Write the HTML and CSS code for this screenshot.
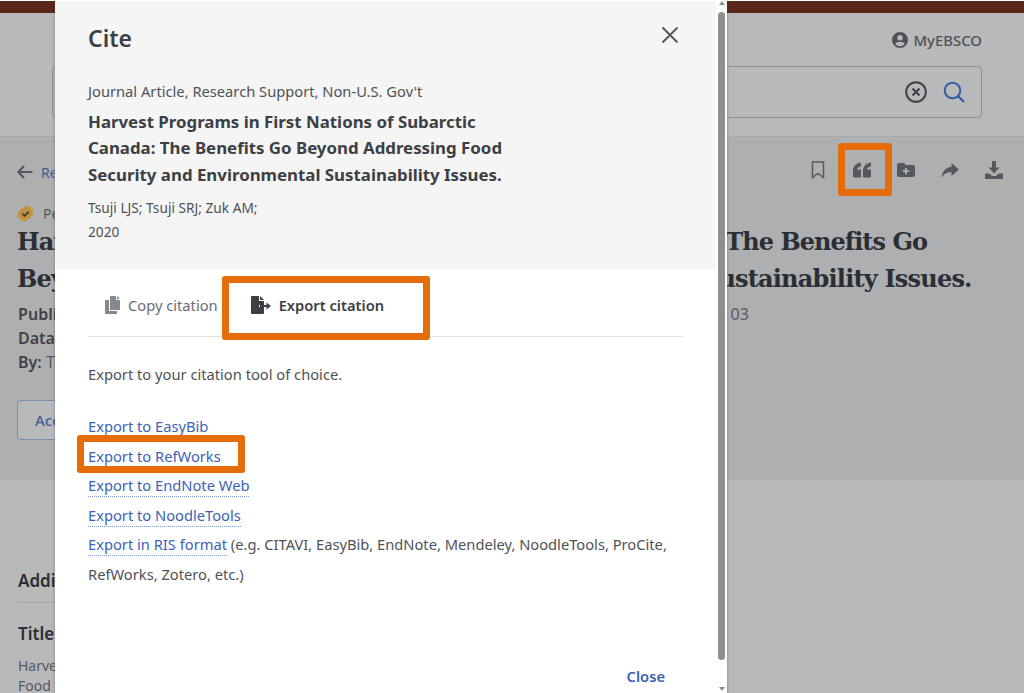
FILE: index.html
```html
<!DOCTYPE html>
<html lang="en">
<head>
<meta charset="utf-8">
<title>Cite</title>
<link rel="stylesheet" href="styles.css">
</head>
<body>
<div class="page">
  <div class="topbar"></div>
  <header class="header">
    <div class="account">
      <svg class="account-icon" viewBox="0 0 16 16"><path fill-rule="evenodd" d="M8 0a8 8 0 1 0 0 16A8 8 0 0 0 8 0zm0 3a2.7 2.7 0 1 1 0 5.400A2.700 2.700 0 0 1 8 3zm0 11.200c-1.900 0-3.600-.9-4.700-2.200.5-1.300 1.800-2.100 3.200-2.100h3c1.400 0 2.700.8 3.200 2.100A6.200 6.200 0 0 1 8 14.200z"/></svg>
      <span>MyEBSCO</span>
    </div>
    <div class="search">
      <svg class="clear-icon" viewBox="0 0 22 22"><circle cx="11" cy="11" r="9.800" fill="none" stroke="#3f4348" stroke-width="2"/><path d="M7.500 7.500l7 7M14.500 7.500l-7 7" stroke="#3f4348" stroke-width="2.200"/></svg>
      <svg class="search-icon" viewBox="0 0 22 22"><circle cx="9.500" cy="9.500" r="7.800" fill="none" stroke="#2f5ea6" stroke-width="2"/><path d="M15 15l6 6" stroke="#2f5ea6" stroke-width="2.200"/></svg>
    </div>
  </header>
  <main class="article">
    <div class="article-top">
      <div class="back">
        <svg class="back-icon" viewBox="0 0 16 14"><path d="M7 1L1.500 7 7 13M2 7h13.500" fill="none" stroke="#55595e" stroke-width="2.200"/></svg>
        <span class="back-link">Results</span>
      </div>
      <div class="actions">
        <svg class="act bookmark" viewBox="0 0 14 18"><path d="M1.500 1h11v15.500L7 12.500l-5.500 4z" fill="none" stroke="#55595e" stroke-width="1.500"/></svg>
        <svg class="act quote" viewBox="0 0 18 16"><path d="M8 .5C3.500 1 .5 3.500 0 8v6.500a1 1 0 0 0 1 1h6a1 1 0 0 0 1-1V8.500a1 1 0 0 0-1-1H4c.3-1.700 1.900-2.800 4-3zM18 .5c-4.500.5-7.500 3-8 7.500v6.500a1 1 0 0 0 1 1h6a1 1 0 0 0 1-1V8.500a1 1 0 0 0-1-1h-3c.3-1.700 1.900-2.800 4-3z" fill="#55595e"/></svg>
        <svg class="act folder" viewBox="0 0 18 14"><path fill-rule="evenodd" d="M2 0h5l2 2h7a2 2 0 0 1 2 2v8a2 2 0 0 1-2 2H2a2 2 0 0 1-2-2V2a2 2 0 0 1 2-2zm6 5v2.300H5.700v1.700H8v2.300h1.800V9h2.400V7.300H9.800V5z" fill="#55595e"/></svg>
        <svg class="act share" viewBox="0 0 18 15"><path d="M10.500 0L18 6.500 10.500 13V9.200C6 9.200 3 10.500 1 14.500 1 9 4 4.500 10.500 3.800z" fill="#55595e"/></svg>
        <svg class="act download" viewBox="0 0 18 18"><path d="M7 0h4v6.500h3.500L9 12.500 3.500 6.500H7zM0 12.500h4.500L7 15h4l2.500-2.500H18V18H0z" fill="#55595e"/></svg>
      </div>
    </div>
    <div class="peer">
      <svg class="peer-icon" viewBox="0 0 16 16"><path d="M8 0l2 1.400 2.400-.2.900 2.300 2.100 1.200-.6 2.300.6 2.300-2.100 1.200-.9 2.300-2.400-.2L8 16l-2-1.400-2.400.2-.9-2.300L.6 11.300 1.200 9 .6 6.700l2.100-1.200.9-2.300 2.400.2z" fill="#c2923c"/><path d="M5 8l2.200 2.200L11 6.300" fill="none" stroke="#33373b" stroke-width="1.600"/></svg>
      <span>Peer reviewed</span>
    </div>
    <h1 class="headline"><span class="line-one">Harvest Programs in First Nations of Subarctic Canada: The Benefits Go</span><br><span class="line-two">Beyond Addressing Food Security and Environmental Sustainability Issues.</span></h1>
    <p class="meta meta-first"><b>Published in:</b> International Journal of Environmental Research and Public Health, 17, 2020 Apr 03</p>
    <p class="meta"><b>Database</b> MEDLINE</p>
    <p class="meta"><b>By:</b> Tsuji LJS; Tsuji SRJ; Zuk AM</p>
    <div class="access">Access now</div>
  </main>
  <section class="additional">
    <h2 class="add-title">Additional information</h2>
    <h3 class="add-sub">Title</h3>
    <p class="add-text">Harvest Programs in First Nations of Subarctic Canada: The Benefits Go Beyond Addressing<br>Food Security and Environmental Sustainability Issues.</p>
  </section>
</div>

<div class="mark mark-quote"></div>

<div class="modal" role="dialog">
  <div class="modal-main">
    <div class="modal-head">
      <div class="modal-title-row">
        <h2 class="modal-title">Cite</h2>
        <svg class="close-x" viewBox="0 0 18 18"><path d="M1.500 1.500l15 15M16.500 1.500l-15 15" stroke="#55595e" stroke-width="2"/></svg>
      </div>
      <p class="doc-type">Journal Article, Research Support, Non-U.S. Gov't</p>
      <h3 class="doc-title">Harvest Programs in First Nations of Subarctic Canada: The Benefits Go Beyond Addressing Food Security and Environmental Sustainability Issues.</h3>
      <p class="doc-meta">Tsuji LJS; Tsuji SRJ; Zuk AM;<br>2020</p>
    </div>
    <div class="modal-body">
      <div class="tabs">
        <div class="tab">
          <svg class="tab-icon" viewBox="0 0 16 18"><path d="M5 0h6v4h4v10H5zM12 0l3 3h-3zM0 4h4v11h8v3H0z" fill="#85888c"/></svg>
          <span>Copy citation</span>
        </div>
        <div class="tab tab-active">
          <svg class="tab-icon-active" viewBox="0 0 20 18"><path d="M1 0h7v5h5v4H8v2h5v6a1 1 0 0 1-1 1H1a1 1 0 0 1-1-1V1a1 1 0 0 1 1-1zM9 0l4 4H9z" fill="#3c3f44"/><path d="M9 9h6.500V6.500L20 10l-4.500 3.500V11H9z" fill="#3c3f44"/></svg>
          <span>Export citation</span>
        </div>
      </div>
      <p class="lead">Export to your citation tool of choice.</p>
      <ul class="links">
        <li><a class="link plain">Export to EasyBib</a></li>
        <li><a class="link plain">Export to RefWorks</a></li>
        <li><a class="link">Export to EndNote Web</a></li>
        <li><a class="link">Export to NoodleTools</a></li>
        <li><a class="link">Export in RIS format</a> (e.g. CITAVI, EasyBib, EndNote, Mendeley, NoodleTools, ProCite, RefWorks, Zotero, etc.)</li>
      </ul>
      <div class="modal-foot"><a class="close-link">Close</a></div>
    </div>
  </div>
  <div class="scrollbar">
    <span class="arrow-up"></span>
    <span class="thumb"></span>
    <span class="arrow-down"></span>
  </div>
  <div class="mark mark-tab"></div>
  <div class="mark mark-link"></div>
</div>
</body>
</html>
```

FILE: styles.css
```css
* { box-sizing: border-box; }
html, body { margin: 0; height: 100%; overflow: hidden; }
body {
  background: #b3b4b6;
  font-family: "Noto Sans", sans-serif;
  color: #3f4246;
  position: relative;
}
h1, h2, h3, p, ul { margin: 0; padding: 0; }

.page { height: 693px; overflow: hidden; padding-top: 1px; background: #fff; }
.topbar { height: 12px; background: #5b2718; }
.header {
  height: 123px;
  background: #b8b9bb;
  padding: 0 42px 0 52px;
  display: flex;
  flex-direction: column;
  align-items: flex-end;
}
.account {
  display: flex;
  align-items: center;
  gap: 5px;
  height: 28px;
  margin-top: 13px;
  font-size: 14.900px;
  font-weight: 500;
  color: #4e5257;
}
.account-icon { width: 16px; height: 16px; fill: #4e5257; }
.search {
  align-self: stretch;
  height: 52px;
  margin-top: 12px;
  border: 1px solid #8d8f92;
  border-radius: 4px;
  display: flex;
  align-items: center;
  justify-content: flex-end;
  gap: 16px;
  padding-right: 16px;
}
.clear-icon { width: 22px; height: 22px; }
.search-icon { width: 22px; height: 22px; }

.article {
  height: 344px;
  background: #aeafb1;
  padding: 0 18px;
  border-top: 1px solid #a9aaac;
}
.article-top {
  height: 60px;
  display: flex;
  justify-content: space-between;
  align-items: center;
  padding-top: 6px;
}
.back { display: flex; align-items: center; gap: 8px; font-size: 14px; padding-top: 4px; margin-left: -1px; }
.back-icon { width: 16px; height: 14px; }
.back-link { color: #3f5b97; }
.actions { display: flex; align-items: center; gap: 26px; padding-right: 3px; }
.act { display: block; }
.bookmark { width: 14px; height: 18px; }
.quote { width: 18px; height: 16px; margin-left: 2px; }
.folder { width: 18px; height: 14px; }
.share { width: 18px; height: 15px; }
.download { width: 18px; height: 18px; }

.peer { display: flex; align-items: center; gap: 9px; font-size: 14px; height: 20px; margin-top: 6px; margin-left: -1px; color: #55595e; }
.peer-icon { width: 17px; height: 17px; }
.headline {
  font-family: "DejaVu Serif", serif;
  font-size: 24px;
  font-weight: 700;
  line-height: 37px;
  color: #2b2e33;
  white-space: nowrap;
  margin-left: -1px;
}
.line-one { letter-spacing: -0.96px; }
.line-two { letter-spacing: -0.8px; }
.meta { font-size: 16px; line-height: 24px; color: #55595e; white-space: nowrap; }
.meta b { font-weight: 600; color: #3f4246; }
.meta-first { margin-top: 5px; letter-spacing: 0.04px; }
.access {
  width: 160px;
  height: 40px;
  margin-top: 26px;
  margin-left: -1px;
  border: 1px solid #7c8db3;
  border-radius: 4px;
  background: #b8b9bb;
  color: #3f5b97;
  font-size: 15px;
  font-weight: 500;
  line-height: 38px;
  padding-left: 17px;
}

.additional { height: 213px; background: #b8b9bb; padding: 90px 18px 0; }
.add-title { width: 680px; font-size: 17px; font-weight: 600; color: #2b2e33; line-height: 22px; border-bottom: 1px solid #a2a3a5; padding-bottom: 10px; white-space: nowrap; }
.add-sub { font-size: 17px; font-weight: 600; color: #2b2e33; line-height: 22px; margin-top: 20px; }
.add-text { font-size: 14px; line-height: 20px; color: #55595e; margin-top: 11px; white-space: nowrap; }

.modal {
  position: absolute;
  left: 55px;
  top: 0;
  width: 672px;
  height: 693px;
  display: flex;
  background: #fff;
  box-shadow: 0 0 3px rgba(60, 60, 60, .45);
}
.modal-main { width: 661px; display: flex; flex-direction: column; }
.modal-head { height: 268px; background: #f5f5f5; padding: 0 33px; margin-top: 1px; }
.modal-title-row { display: flex; justify-content: space-between; align-items: center; height: 38px; margin-top: 18px; }
.modal-title { font-size: 23px; font-weight: 600; color: #3c3f44; line-height: 38px; }
.close-x { width: 18px; height: 18px; margin-right: 4px; margin-top: -7px; }
.doc-type { font-size: 14.700px; line-height: 22px; margin-top: 23px; color: #4e5257; }
.doc-title { font-size: 16.850px; font-weight: 700; line-height: 26.300px; margin-top: 7px; width: 425px; color: #3c3f44; }
.doc-meta { font-size: 13.700px; line-height: 24px; margin-top: 8px; color: #4e5257; }

.modal-body { flex: 1; padding: 0 33px; display: flex; flex-direction: column; background: #fff; min-height: 0; }
.tabs { display: flex; height: 68px; border-bottom: 1px solid #e3e3e3; }
.tab { display: flex; align-items: center; gap: 7px; padding-left: 17px; font-size: 14.700px; color: #6a6d71; height: 74px; margin-top: -1px; }
.tab-active { margin-left: 33px; padding-left: 0; gap: 8px; color: #3c3f44; font-weight: 600; }
.tab-icon { width: 16px; height: 18px; }
.tab-icon-active { width: 20px; height: 18px; }
.lead { font-size: 14.700px; line-height: 22px; margin-top: 26px; color: #4e5257; }
.links { list-style: none; margin-top: 27px; width: 590px; font-size: 14.700px; line-height: 29.600px; color: #4e5257; }
.link { color: #3c62b6; border-bottom: 1px dotted #7d9bd8; padding-bottom: 1px; }
.link.plain { border-bottom-color: transparent; }
.modal-foot { margin-top: auto; height: 27px; display: flex; justify-content: flex-end; padding-right: 18px; }
.close-link { color: #3c62b6; font-size: 14.700px; font-weight: 600; line-height: 22px; margin-top: -1px; }

.scrollbar { width: 11px; position: relative; display: flex; flex-direction: column; align-items: center; background: #fff; }
.thumb { width: 7px; height: 648px; background: #8f8f8f; border-radius: 4px; margin-top: 7px; }
.arrow-up { width: 0; height: 0; margin-top: 1px; border: 3px solid transparent; border-top: 0; border-bottom: 4px solid #8f8f8f; }
.arrow-down { width: 0; height: 0; margin-top: 27px; border: 3px solid transparent; border-bottom: 0; border-top: 4px solid #8f8f8f; }

.mark { position: absolute; border: 7px solid #e66c09; border-radius: 3px; }
.mark-quote { left: 838px; top: 143px; width: 54px; height: 53px; }
.mark-tab { left: 167px; top: 276px; width: 208px; height: 64px; }
.mark-link { left: 22px; top: 435px; width: 168px; height: 38px; }
```
